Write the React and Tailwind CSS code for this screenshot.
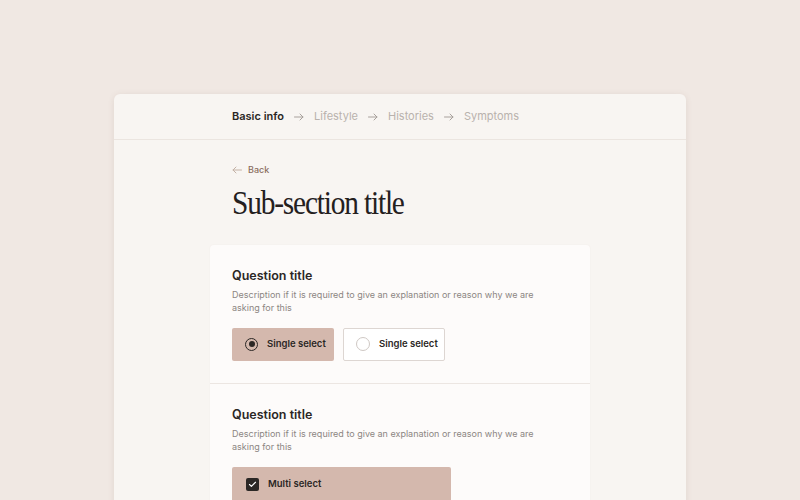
import { Check } from 'lucide-react';

const steps = ['Basic info', 'Lifestyle', 'Histories', 'Symptoms'];

const Arrow = ({ className, left }) => (
  <svg width="10" height="8" viewBox="0 0 10 8" fill="none" className={className}>
    {left ? (
      <path d="M9.5 4H1M4 1L1 4l3 3" stroke="currentColor" strokeWidth="1" strokeLinecap="round" strokeLinejoin="round" />
    ) : (
      <path d="M0.5 4H9M6 1l3 3-3 3" stroke="currentColor" strokeWidth="1" strokeLinecap="round" strokeLinejoin="round" />
    )}
  </svg>
);

const Question = ({ children, last }) => (
  <div className={`px-[22px] pt-[23px] pb-[22px] ${last ? '' : 'border-b border-[#ece6e2]'}`}>
    <h3 className="text-[12.5px] font-semibold text-[#2b2725] leading-[16px]">Question title</h3>
    <p className="mt-[4px] w-[302px] text-[9px] leading-[13px] text-[#8c8682]">
      Description if it is required to give an explanation or reason why we are asking for this
    </p>
    <div className="mt-[14px]">{children}</div>
  </div>
);

const App = () => {
  return (
    <div className="min-h-screen bg-[#f0e8e3] pt-[94px] overflow-hidden font-['Inter',sans-serif]">
      <div className="mx-auto w-[572px] h-[420px] bg-[#f8f5f2] rounded-[6px] shadow-[0_1px_6px_rgba(120,90,70,0.12)]">
        <div className="h-[46px] border-b border-[#ebe5e0] flex items-center pl-[118px] gap-[10px] text-[11px]">
          {steps.map((s, i) => (
            <div key={s} className="flex items-center gap-[10px]">
              {i > 0 && <Arrow className="text-[#a8a19c]" />}
              <span className={i === 0 ? 'font-semibold text-[#2b2725]' : 'text-[#b9b2ad]'}>{s}</span>
            </div>
          ))}
        </div>

        <div className="pl-[118px] pt-[23px]">
          <div className="flex items-center gap-[6px] text-[9px] font-medium text-[#8a6d5e]">
            <Arrow left className="text-[#c4b2a6]" />
            <span>Back</span>
          </div>
          <h1 className="mt-[6px] font-['Liberation_Serif',serif] text-[33px] leading-[40px] tracking-[-0.04em] text-[#24201e] [transform:scaleX(0.89)] origin-left">
            Sub-section title
          </h1>
        </div>

        <div className="mt-[22px] ml-[96px] w-[380px] bg-[#fdfbfa] rounded-[4px] shadow-[0_0_2px_rgba(120,90,70,0.06)]">
          <Question>
            <div className="flex gap-[9px]">
              <button className="w-[102px] h-[33px] bg-[#d4b8ad] rounded-[2px] flex items-center pl-[13px] gap-[9px]">
                <span className="w-[13px] h-[13px] rounded-full border-[1.5px] border-[#2b2725] flex items-center justify-center">
                  <span className="w-[6px] h-[6px] rounded-full bg-[#2b2725]" />
                </span>
                <span className="text-[9.5px] font-semibold text-[#2b2725]">Single select</span>
              </button>
              <button className="w-[102px] h-[33px] bg-white border border-[#ddd6d2] rounded-[2px] flex items-center pl-[12px] gap-[9px]">
                <span className="w-[14px] h-[14px] rounded-full border border-[#cfc8c4]" />
                <span className="text-[9.5px] font-semibold text-[#2b2725]">Single select</span>
              </button>
            </div>
          </Question>
          <Question last>
            <button className="w-[219px] h-[36px] bg-[#d4b8ad] rounded-[2px] flex items-center pl-[14px] gap-[9px]">
              <span className="w-[13px] h-[13px] rounded-[2px] bg-[#2b2725] flex items-center justify-center">
                <Check size={9} strokeWidth={3} className="text-white" />
              </span>
              <span className="text-[9.5px] font-semibold text-[#2b2725]">Multi select</span>
            </button>
          </Question>
        </div>
      </div>
    </div>
  );
};

export default App;
